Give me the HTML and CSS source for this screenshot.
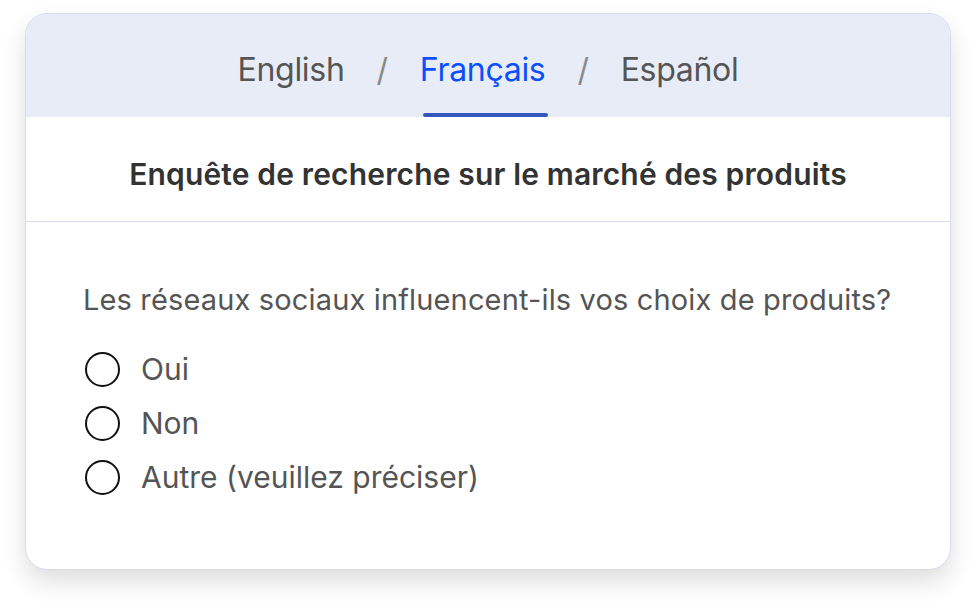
FILE: index.html
```html
<!DOCTYPE html>
<html lang="fr">
<head>
<meta charset="utf-8">
<title>Enquête</title>
<link rel="stylesheet" href="styles.css">
</head>
<body>
<div class="card">
  <div class="tabs">
    <span class="tab">English</span>
    <span class="sep">/</span>
    <span class="tab active">Français</span>
    <span class="sep">/</span>
    <span class="tab">Español</span>
  </div>
  <div class="title">Enquête de recherche sur le marché des produits</div>
  <div class="body">
    <div class="question">Les réseaux sociaux influencent-ils vos choix de produits?</div>
    <ul class="options">
      <li class="option"><span class="radio"></span><span>Oui</span></li>
      <li class="option"><span class="radio"></span><span>Non</span></li>
      <li class="option"><span class="radio"></span><span>Autre (veuillez préciser)</span></li>
    </ul>
  </div>
</div>
</body>
</html>
```
FILE: styles.css
```css
html, body { margin: 0; padding: 0; background: #fff; }
body {
  font-family: Inter, "Noto Sans", sans-serif;
  width: 976px; height: 608px; overflow: hidden;
}
.card {
  box-sizing: border-box;
  margin: 13px 0 0 25px;
  width: 926px;
  height: 557px;
  background: #fff;
  border: 1px solid #d6daec;
  border-radius: 22px;
  overflow: hidden;
  box-shadow: 0 12px 24px rgba(0,0,0,0.13);
}
.tabs {
  height: 103px;
  background: #e8ecf7;
  display: flex;
  justify-content: center;
  align-items: center;
  font-size: 32px;
  line-height: 40px;
  letter-spacing: -0.3px;
  color: #555;
  padding-top: 8px;
  box-sizing: border-box;
}
.tab { position: relative; }
.sep { color: #8a8a8a; margin: 0 32px; }
.tab.active { color: #0b4ffb; }
.tab.active::after {
  content: "";
  position: absolute;
  left: 3px; right: -3px;
  top: 63px;
  height: 4px;
  border-radius: 2px;
  background: #3558c0;
}
.title {
  height: 105px;
  border-bottom: 1px solid #d6daec;
  display: flex;
  justify-content: center;
  align-items: center;
  font-size: 30px;
  line-height: 40px;
  font-weight: 600;
  color: #333;
  letter-spacing: 0.15px;
  padding-top: 10px;
  box-sizing: border-box;
}
.body { padding: 58px 0 0 57px; }
.question {
  font-size: 29px;
  color: #555;
  letter-spacing: 0.15px;
  line-height: 40px;
}
.options { list-style: none; margin: 22px 0 0 0; padding: 0; }
.option {
  display: flex;
  align-items: center;
  height: 54px;
  font-size: 30px;
  color: #555;
}
.radio {
  box-sizing: border-box;
  width: 35px; height: 35px;
  border: 2px solid #111;
  border-radius: 50%;
  margin: 0 21px 0 2px;
  flex: none;
}
```
